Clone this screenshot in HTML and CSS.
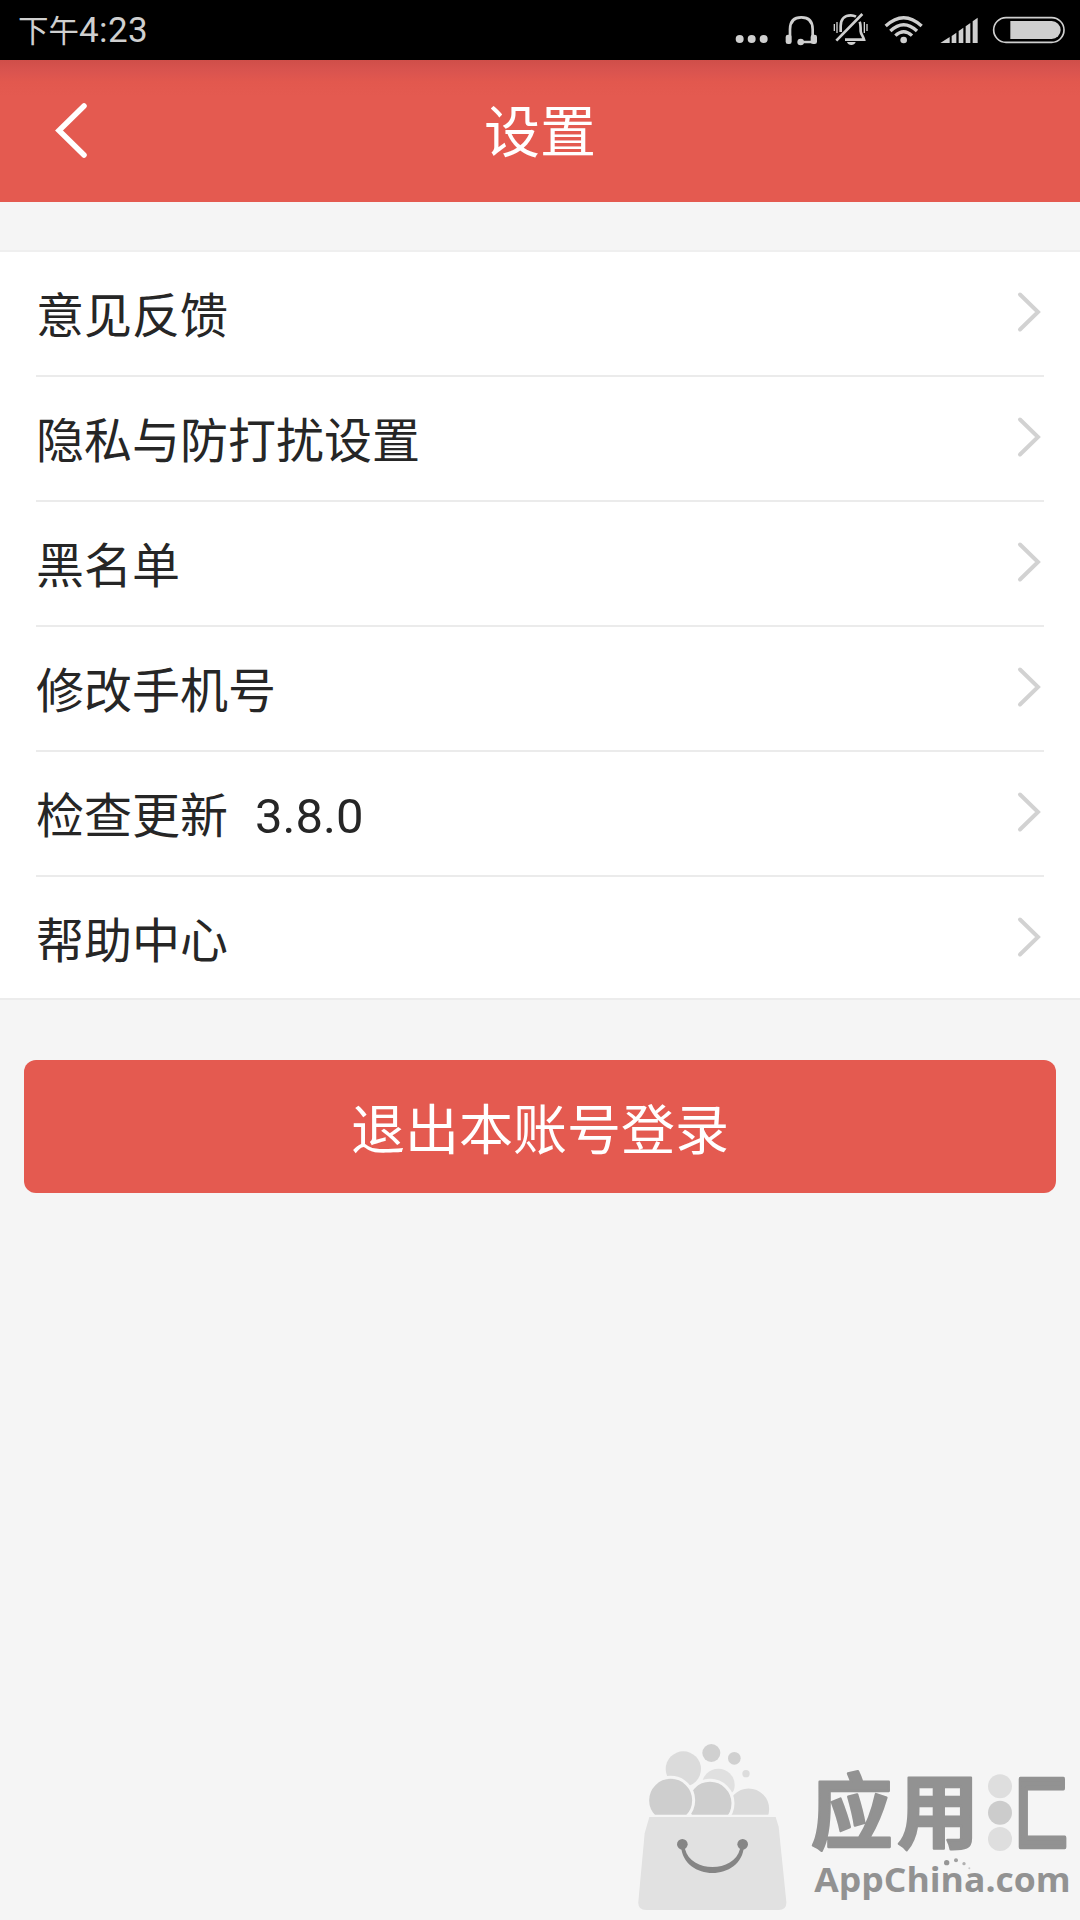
FILE: index.html
```
<!DOCTYPE html>
<html lang="zh-CN">
<head>
  <meta charset="UTF-8">
  <title>设置</title>
  <link rel="stylesheet" href="styles.css">
</head>
<body>

  <div class="status-bar">
    <div class="status-time">下午<span>4:23</span></div>
    <div class="status-icons">
      <svg width="50" height="60" viewBox="40 0 150 180">
        <circle cx="60" cy="117" r="12"/>
        <circle cx="96" cy="117" r="12"/>
        <circle cx="132" cy="117" r="12"/>
      </svg>
      <svg width="45" height="60" viewBox="190 0 135 180">
        <path class="line" d="M211 110V88C211 63 224 52 245 52S279 63 279 88V110M245 126H276"/>
        <rect x="198" y="104" width="18" height="28" rx="7"/>
        <rect x="273" y="104" width="19" height="28" rx="7"/>
        <circle cx="243" cy="126" r="10"/>
      </svg>
      <svg width="52" height="60" viewBox="325 0 156 180">
        <path class="line" d="M363 96V78C363 56 376 46 393 46C399 46 404 47 409 50M420 65C423 72 423 80 423 94C424 104 430 107 433 119H376M350 122L428 42"/>
        <path class="line thin" d="M344 72V93M352 66V99M434 66V99M442 72V93"/>
        <path d="M382 126H408C405 138 385 138 382 126Z"/>
      </svg>
      <svg width="56" height="60" viewBox="481 0 168 180">
        <path class="line wifi" d="M498 78Q552 28 606 78M512 93Q552 55 592 93M527 107Q552 83 577 107"/>
        <circle cx="552" cy="120" r="10"/>
      </svg>
      <svg width="54" height="60" viewBox="649 0 162 180">
        <path d="M662 129L690 111V129ZM696 108L710 98V129H696ZM717 93L731 83V129H717ZM738 79L752 69V129H738ZM759 64L774 53V129H759Z"/>
      </svg>
      <svg width="89" height="60" viewBox="811 0 267 180">
        <rect class="line battery" x="822" y="53" width="211" height="74" rx="37"/>
        <path d="M872 63H996A27 27 0 0 1 996 117H872Z"/>
      </svg>
    </div>
  </div>

  <header class="header">
    <a class="back" href="#" aria-label="返回">
      <svg width="40" height="64" viewBox="0 0 40 64">
        <path d="M34 7L9 31.5L34 56"/>
      </svg>
    </a>
    <h1>设置</h1>
  </header>

  <ul class="menu">
    <li class="menu-item">
      <span>意见反馈</span>
      <svg class="arrow" width="24" height="42" viewBox="0 0 24 42"><path d="M3 3.5L21 21L3 38.5"/></svg>
    </li>
    <li class="menu-item">
      <span>隐私与防打扰设置</span>
      <svg class="arrow" width="24" height="42" viewBox="0 0 24 42"><path d="M3 3.5L21 21L3 38.5"/></svg>
    </li>
    <li class="menu-item">
      <span>黑名单</span>
      <svg class="arrow" width="24" height="42" viewBox="0 0 24 42"><path d="M3 3.5L21 21L3 38.5"/></svg>
    </li>
    <li class="menu-item">
      <span>修改手机号</span>
      <svg class="arrow" width="24" height="42" viewBox="0 0 24 42"><path d="M3 3.5L21 21L3 38.5"/></svg>
    </li>
    <li class="menu-item">
      <span>检查更新<span class="version">3.8.0</span></span>
      <svg class="arrow" width="24" height="42" viewBox="0 0 24 42"><path d="M3 3.5L21 21L3 38.5"/></svg>
    </li>
    <li class="menu-item">
      <span>帮助中心</span>
      <svg class="arrow" width="24" height="42" viewBox="0 0 24 42"><path d="M3 3.5L21 21L3 38.5"/></svg>
    </li>
  </ul>

  <button class="logout" type="button">退出本账号登录</button>

  <footer class="brand">
    <svg width="460" height="200" viewBox="0 0 1380 600">
      <!-- Bolsa con burbujas -->
      <circle cx="190" cy="147" r="53" fill="#dbdbdb"/>
      <circle cx="295" cy="195" r="49" fill="#e0e0e0"/>
      <circle cx="274" cy="99" r="27" fill="#d0d0d0"/>
      <circle cx="343" cy="115" r="19" fill="#d0d0d0"/>
      <circle cx="378" cy="161" r="11" fill="#dcdcdc"/>
      <circle class="bubble" cx="386" cy="267" r="66" fill="#dadada"/>
      <circle class="bubble" cx="270" cy="250" r="69" fill="#cecece"/>
      <circle class="bubble" cx="152" cy="241" r="69" fill="#cecece"/>
      <path d="M70 284H480V340H70Z" fill="#f5f5f5"/>
      <path d="M88 291H467L476 320L499 545Q501 570 476 570H78Q53 570 55 545L74 340Z" fill="#e1e1e1"/>
      <circle cx="187" cy="373" r="16" fill="#858585"/>
      <circle cx="368" cy="373" r="16" fill="#858585"/>
      <path d="M183 378C190 486 365 486 372 378L360 387C342 459 213 459 195 387Z" fill="#858585"/>

      <!-- Nombre de la tienda -->
      <g transform="translate(540 90)">
        <text class="brand-cn" x="32" y="277">应</text>
        <text class="brand-cn" x="291" y="277">用</text>
        <circle cx="600" cy="109" r="36" fill="#dedede"/>
        <circle cx="600" cy="188" r="36" fill="#cccccc"/>
        <circle cx="600" cy="267" r="36" fill="#dedede"/>
        <text class="brand-cn thick" transform="translate(644 281) scale(.66 1)">匚</text>
        <text class="brand-en" x="43" y="427" textLength="769" lengthAdjust="spacingAndGlyphs">AppChina.com</text>
        <circle cx="440" cy="338" r="8" fill="#969696"/>
        <circle cx="468" cy="331" r="6" fill="#a0a0a0"/>
        <circle cx="492" cy="341" r="5" fill="#b0b0b0"/>
        <circle cx="508" cy="355" r="3" fill="#c8c8c8"/>
      </g>
    </svg>
  </footer>

</body>
</html>
```
FILE: styles.css
```
* {
  box-sizing: border-box;
}

body {
  margin: 0;
  height: 1920px;
  display: flex;
  flex-direction: column;
  overflow: hidden;
  background-color: #f5f5f5;
  color: #262626;
  font-family: "Noto Sans CJK SC", sans-serif;
}

svg {
  display: block;
  flex-shrink: 0;
}

/* Barra de estado */
.status-bar {
  height: 60px;
  padding-left: 18px;
  display: flex;
  justify-content: space-between;
  align-items: center;
  background-color: #000;
}

.status-time {
  font-size: 30.5px;
  line-height: 56px;
  padding-bottom: 3px;
  color: #cfcfcf;
}

.status-time span {
  font-family: Roboto, sans-serif;
  font-size: 35px;
  letter-spacing: 0.4px;
  line-height: 1;
}

.status-icons {
  display: flex;
  width: 347px;
  fill: #cfcfcf;
}

.line {
  fill: none;
  stroke: #cfcfcf;
  stroke-width: 8;
}

.line.thin {
  stroke-width: 4;
}

.line.wifi {
  stroke-width: 10;
}

.line.battery {
  stroke-width: 5;
}

/* Encabezado */
.header {
  height: 142px;
  padding: 0 50px;
  display: grid;
  grid-template-columns: 40px 1fr 40px;
  align-items: center;
  background: linear-gradient(#cf4e49 0, #da544f 12px, #e2584e 22px, #e45a50 36px);
}

.back path {
  fill: none;
  stroke: #fff;
  stroke-width: 5.5;
  stroke-linecap: round;
}

.header h1 {
  margin: 0;
  padding-bottom: 7px;
  color: #fff;
  font-size: 56px;
  font-weight: 400;
  line-height: 135px;
  text-align: center;
}

/* Lista de opciones */
.menu {
  margin: 48px 0 0;
  padding: 0 36px;
  list-style: none;
  background-color: #fff;
  border-top: 2px solid #efefef;
  border-bottom: 2px solid #ececec;
}

.menu-item {
  height: 125px;
  padding: 0 3px 4px 0;
  display: flex;
  justify-content: space-between;
  align-items: center;
  border-bottom: 2px solid #ebebeb;
  font-size: 48px;
  line-height: 72px;
}

.menu-item:last-child {
  height: 121px;
  padding-bottom: 2px;
  border-bottom: none;
}

.version {
  margin-left: 27px;
  font-family: Roboto, sans-serif;
  font-size: 49px;
  line-height: 1;
}

.arrow path {
  fill: none;
  stroke: #d2d2d2;
  stroke-width: 4;
  stroke-linecap: round;
}

.logout {
  height: 133px;
  margin: 60px 24px 0;
  padding: 0;
  border: none;
  border-radius: 12px;
  background-color: #e45a50;
  color: #fff;
  font-family: inherit;
  font-size: 54px;
  cursor: pointer;
}

/* Logo inferior */
.brand {
  margin-top: auto;
  display: flex;
  justify-content: flex-end;
}

.bubble {
  stroke: #f5f5f5;
  stroke-width: 9;
}

.brand-cn {
  font-size: 246px;
  font-weight: 700;
  fill: #929292;
  stroke: #929292;
  stroke-width: 7;
  stroke-linejoin: round;
}

.brand-cn.thick {
  stroke-width: 14;
}

.brand-en {
  font-family: "Open Sans", sans-serif;
  font-size: 102px;
  font-weight: 700;
  fill: #929292;
}
```
